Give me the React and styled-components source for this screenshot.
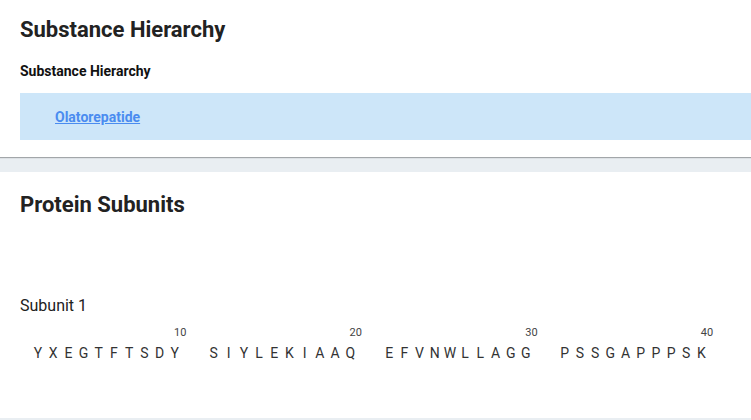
import React from "react";
import styled, { createGlobalStyle } from "styled-components";

const Global = createGlobalStyle`
  html, body { margin: 0; padding: 0; }
  body {
    background: #e9eef2;
    font-family: Roboto, "Noto Sans", "Liberation Sans", sans-serif;
    color: #212121;
    overflow: hidden;
  }
`;

const Page = styled.div`
  display: flex;
  flex-direction: column;
  gap: 15px;
`;

const Card = styled.section`
  background: #fff;
  box-shadow: 0 1px 1px rgba(0, 0, 0, 0.3);
  padding: ${(p) => p.$pad};
  height: ${(p) => p.$h}px;
  box-sizing: border-box;
`;

const Title = styled.h2`
  margin: 0;
  font-size: 22px;
  line-height: 28px;
  font-weight: 700;
  color: #222;
`;

const SubTitle = styled.h3`
  margin: 19px 0 0;
  font-size: 14px;
  line-height: 16px;
  font-weight: 700;
  color: #111;
`;

const HierarchyBox = styled.div`
  margin-top: 14px;
  height: 47px;
  background: #cde6f9;
  display: flex;
  align-items: center;
  padding-left: 35px;
`;

const Link = styled.a`
  font-size: 14px;
  font-weight: 700;
  color: #4a8cf0;
  text-decoration: underline;
  cursor: pointer;
`;

const SubunitLabel = styled.div`
  margin-top: 77px;
  font-size: 16px;
  line-height: 20px;
  color: #212121;
`;

const Sequence = styled.div`
  display: flex;
  gap: 23.6px;
  margin-top: 10px;
  padding-left: 10.4px;
`;

const Group = styled.div`
  display: flex;
  flex-direction: column;
  width: 152px;
`;

const Index = styled.div`
  font-size: 11px;
  line-height: 13px;
  color: #444;
  text-align: right;
  margin-right: -4px;
`;

const Residues = styled.div`
  display: flex;
  margin-top: 6px;
`;

const Residue = styled.span`
  width: 15.2px;
  text-align: center;
  font-size: 14px;
  line-height: 16px;
  color: #333;
`;

const seq = "YXEGTFTSDYSIYLEKIAAQEFVNWLLAGGPSSGAPPPSK";
const groups = [];
for (let i = 0; i < seq.length; i += 10) groups.push(seq.slice(i, i + 10));

export default function App() {
  return (
    <>
      <Global />
      <Page>
        <Card $pad="16px 0 17px 20px">
          <Title>Substance Hierarchy</Title>
          <SubTitle>Substance Hierarchy</SubTitle>
          <HierarchyBox>
            <Link>Olatorepatide</Link>
          </HierarchyBox>
        </Card>
        <Card $pad="19px 0 0 20px" $h={246}>
          <Title>Protein Subunits</Title>
          <SubunitLabel>Subunit 1</SubunitLabel>
          <Sequence>
            {groups.map((g, gi) => (
              <Group key={gi}>
                <Index>{(gi + 1) * 10}</Index>
                <Residues>
                  {g.split("").map((c, ci) => (
                    <Residue key={ci}>{c}</Residue>
                  ))}
                </Residues>
              </Group>
            ))}
          </Sequence>
        </Card>
      </Page>
    </>
  );
}
